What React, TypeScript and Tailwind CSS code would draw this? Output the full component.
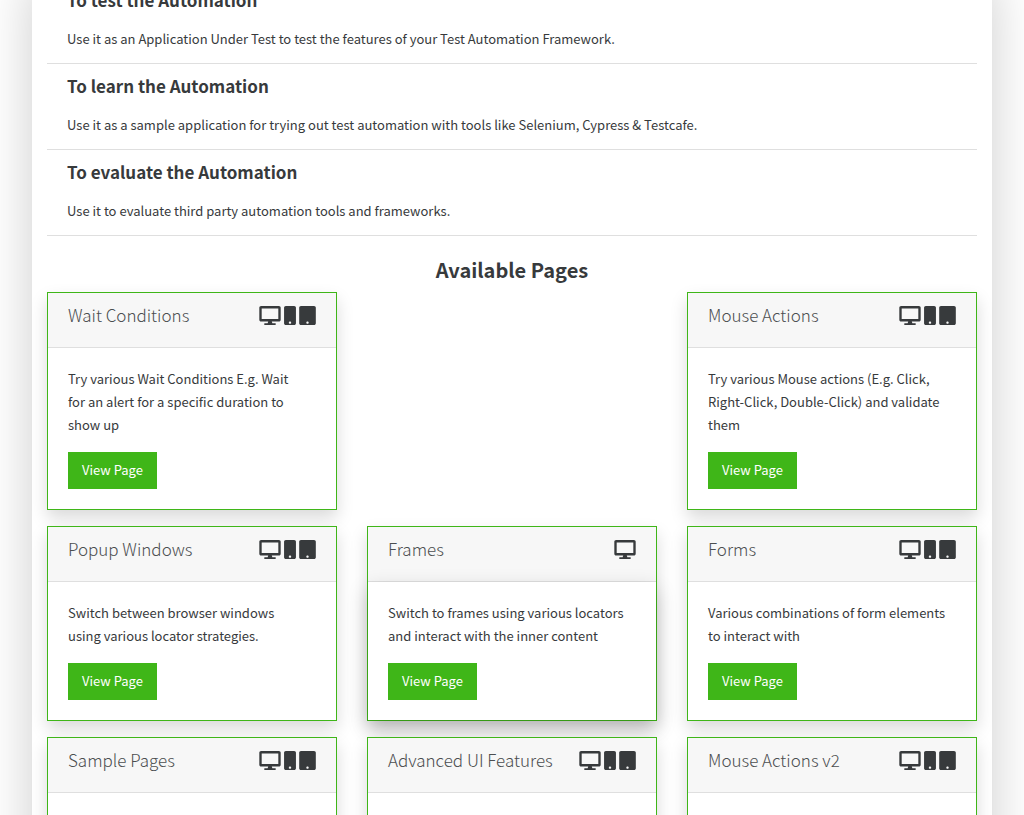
import { FaMobile, FaTablet } from "react-icons/fa";

type Device = "desktop" | "mobile" | "tablet";

type PageCard = {
  title: string;
  text: string;
  devices: Device[];
  column: string;
  raised?: boolean;
};

const ALL: Device[] = ["desktop", "mobile", "tablet"];

const reasons = [
  {
    title: "To test the Automation",
    text: "Use it as an Application Under Test to test the features of your Test Automation Framework.",
  },
  {
    title: "To learn the Automation",
    text: "Use it as a sample application for trying out test automation with tools like Selenium, Cypress & Testcafe.",
  },
  {
    title: "To evaluate the Automation",
    text: "Use it to evaluate third party automation tools and frameworks.",
  },
];

const pages: PageCard[] = [
  {
    title: "Wait Conditions",
    text: "Try various Wait Conditions E.g. Wait\nfor an alert for a specific duration to\nshow up",
    devices: ALL,
    column: "col-start-1",
  },
  {
    title: "Mouse Actions",
    text: "Try various Mouse actions (E.g. Click,\nRight-Click, Double-Click) and validate\nthem",
    devices: ALL,
    column: "col-start-3",
  },
  {
    title: "Popup Windows",
    text: "Switch between browser windows\nusing various locator strategies.",
    devices: ALL,
    column: "col-start-1",
  },
  {
    title: "Frames",
    text: "Switch to frames using various locators\nand interact with the inner content",
    devices: ["desktop"],
    column: "col-start-2",
    raised: true,
  },
  {
    title: "Forms",
    text: "Various combinations of form elements\nto interact with",
    devices: ALL,
    column: "col-start-3",
  },
  { title: "Sample Pages", text: "", devices: ALL, column: "col-start-1" },
  { title: "Advanced UI Features", text: "", devices: ALL, column: "col-start-2" },
  { title: "Mouse Actions v2", text: "", devices: ALL, column: "col-start-3" },
];

function DesktopIcon() {
  return (
    <svg viewBox="0 0 576 512" className="h-[19px] w-[22px]" fill="currentColor" aria-label="Desktop">
      <path d="M528 0H48C21.5 0 0 21.5 0 48v320c0 26.5 21.5 48 48 48h192l-16 48h-72c-13.3 0-24 10.7-24 24s10.7 24 24 24h272c13.3 0 24-10.7 24-24s-10.7-24-24-24h-72l-16-48h192c26.5 0 48-21.5 48-48V48c0-26.5-21.5-48-48-48zm-16 352H64V64h448v288z" />
    </svg>
  );
}

function DeviceIcon({ device }: { device: Device }) {
  if (device === "desktop") return <DesktopIcon />;
  if (device === "mobile") return <FaMobile className="h-[19px] w-3" aria-label="Mobile" />;
  return <FaTablet className="h-[19px] w-[17px]" aria-label="Tablet" />;
}

function Card({ page }: { page: PageCard }) {
  return (
    <article
      className={`${page.column} border border-[#3fb618] bg-white shadow-[0_8px_16px_rgba(0,0,0,0.15)]`}
    >
      <header className="flex items-start justify-between border-b border-[#dfdfdf] bg-[#f7f7f7] px-5 pt-2.5 pb-5">
        <h3 className="text-[17px] leading-6 font-light text-[#4b4e50]">{page.title}</h3>
        <div className="flex gap-[3px] pt-[3px]">
          {page.devices.map((device) => (
            <DeviceIcon key={device} device={device} />
          ))}
        </div>
      </header>
      <div
        className={
          page.raised
            ? "bg-white px-5 pt-[19px] pb-5 shadow-[0_8px_20px_rgba(0,0,0,0.2)]"
            : "px-5 pt-[19px] pb-5"
        }
      >
        <p className="mb-4 min-h-[46px] text-[13px] leading-[23px] whitespace-pre-line">{page.text}</p>
        <a
          href="#view"
          className="inline-block bg-[#3fb618] px-3.5 pt-1.5 pb-2 align-top text-[13px] leading-[23px] text-white"
        >
          View Page
        </a>
      </div>
    </article>
  );
}

export default function App() {
  return (
    <div className="h-screen overflow-hidden bg-white px-8 font-['Noto_Sans_CJK_SC',sans-serif] text-[#373a3c]">
      <main className="bg-white px-[15px] shadow-[0_0_50px_rgba(0,0,0,0.2)]">
        <section className="-mt-[22px]">
          {reasons.map((reason) => (
            <div key={reason.title} className="h-[86px] border-b border-[#dfdfdf] px-5 pt-[11px]">
              <h2 className="mb-4 text-[17px] leading-[22px] font-bold">{reason.title}</h2>
              <p className="text-[13px] leading-[23px]">{reason.text}</p>
            </div>
          ))}
        </section>
        <h1 className="mt-5 mb-2 text-center text-[20px] leading-7 font-bold">Available Pages</h1>
        <section className="grid grid-cols-3 gap-x-[30px] gap-y-4 pb-8">
          {pages.map((page) => (
            <Card key={page.title} page={page} />
          ))}
        </section>
      </main>
    </div>
  );
}
